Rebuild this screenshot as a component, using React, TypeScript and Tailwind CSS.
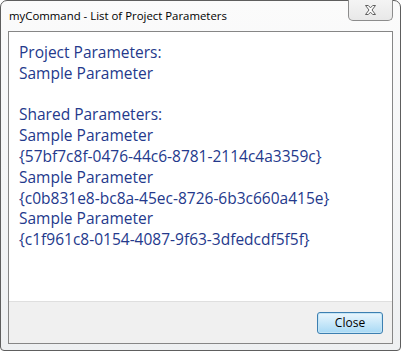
const lines: string[] = [
  "Project Parameters:",
  "Sample Parameter",
  "",
  "Shared Parameters:",
  "Sample Parameter",
  "{57bf7c8f-0476-44c6-8781-2114c4a3359c}",
  "Sample Parameter",
  "{c0b831e8-bc8a-45ec-8726-6b3c660a415e}",
  "Sample Parameter",
  "{c1f961c8-0154-4087-9f63-3dfedcdf5f5f}",
];

export default function App() {
  return (
    <div className="w-[401px] h-[352px] bg-white font-['Open_Sans',sans-serif]">
      <div className="h-[351px] w-[401px] rounded-t-[7px] rounded-b-[4px] border border-[#5e5e5e] bg-gradient-to-b from-[#fbfbfb] to-[#eef0f2] flex flex-col px-[7px] pb-[6px]">
        {/* title bar */}
        <div className="h-[30px] flex justify-between items-start">
          <span className="pl-[1px] pt-[7px] text-[11.4px] text-black leading-[16px]">
            myCommand - List of Project Parameters
          </span>
          <div className="w-[45px] h-[21px] mt-[-1px] rounded-b-[5px] border border-t-0 border-[#8c8c8c] bg-gradient-to-b from-[#f4f4f4] to-[#e8e8e8] flex items-center justify-center">
            <svg width="11" height="10" viewBox="0 0 11 10">
              <path
                d="M0.5 0.5 H3.3 L5.5 2.8 L7.7 0.5 H10.5 L7 5 L10.5 9.5 H7.7 L5.5 7.2 L3.3 9.5 H0.5 L4 5 Z"
                fill="#fdfdfd"
                stroke="#5f5f5f"
                strokeWidth="1"
                strokeLinejoin="round"
              />
            </svg>
          </div>
        </div>
        {/* client */}
        <div className="flex-1 border border-[#868686] flex flex-col">
          <div className="flex-1 bg-white pl-[10px] pt-[10px] text-[15.5px] leading-[20.8px] text-[#24398c]">
            {lines.map((l, i) => (
              <div key={i} className="h-[20.8px] whitespace-nowrap">
                {l}
              </div>
            ))}
          </div>
          <div className="h-[42px] bg-[#f0f0f0] border-t border-[#dfdfdf] flex items-center justify-end pr-[9px]">
            <button className="w-[66px] h-[22px] rounded-[3px] border border-[#3c7fb1] bg-gradient-to-b from-[#eaf6fd] to-[#a7d9f5] text-[12px] text-black leading-none shadow-[inset_0_0_0_1px_#c4e5f6]">
              Close
            </button>
          </div>
        </div>
      </div>
    </div>
  );
}
